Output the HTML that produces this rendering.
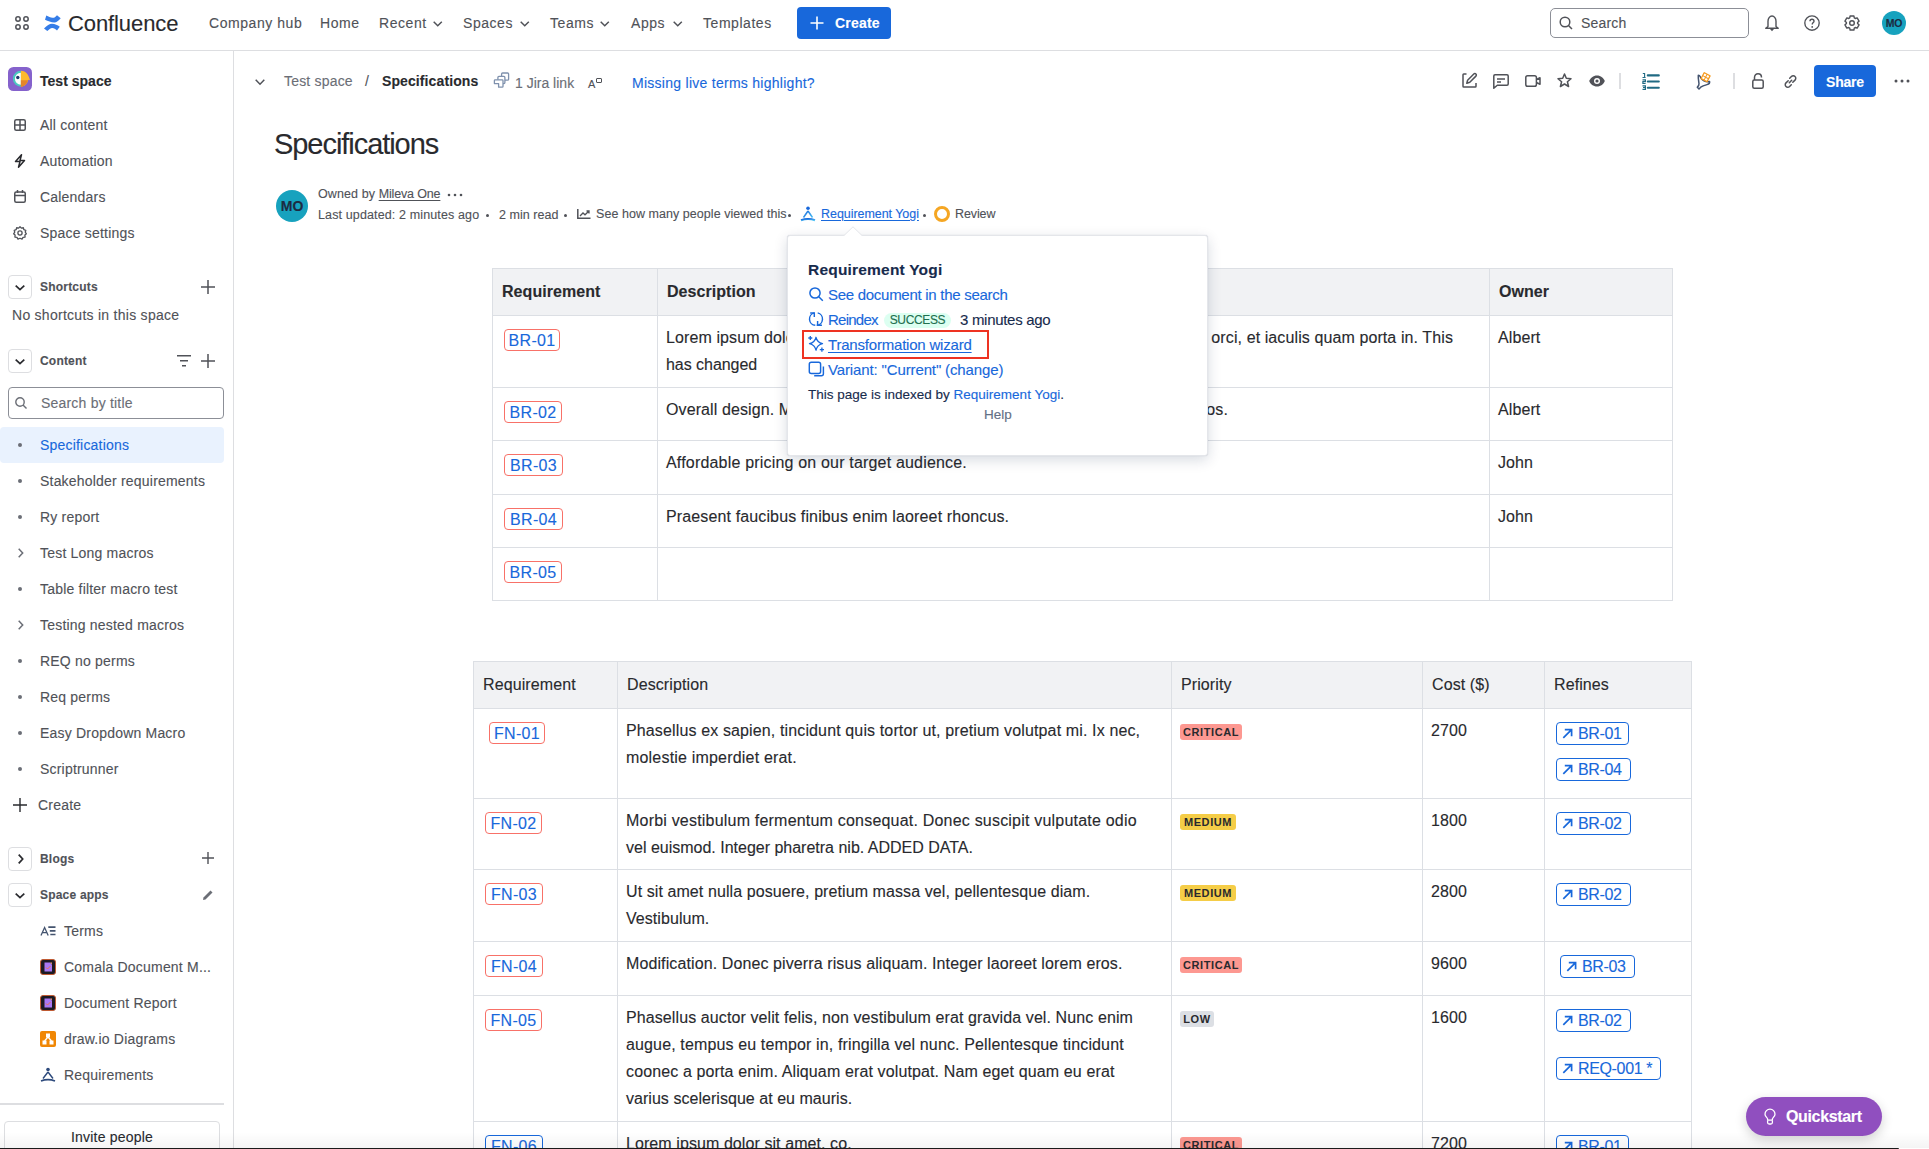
<!DOCTYPE html>
<html><head><meta charset="utf-8">
<style>
*{box-sizing:border-box;margin:0;padding:0}
html,body{width:1929px;height:1149px;overflow:hidden;background:#fff}
body{position:relative;font-family:"Liberation Sans",sans-serif;color:#292A2E}
.a{position:absolute}
.t{position:absolute;white-space:nowrap;-webkit-text-stroke:0.12px currentColor}
svg{position:absolute;overflow:visible}
/* top nav */
.nav{font-size:14px;color:#505258;line-height:20px;top:13px;letter-spacing:0.55px}
.chev{position:absolute;width:7px;height:7px;border-right:1.5px solid #505258;border-bottom:1.5px solid #505258;transform:rotate(45deg)}
/* sidebar */
.sb{font-size:14px;color:#505258;line-height:20px;letter-spacing:0.2px}
.dot{position:absolute;width:4px;height:4px;border-radius:50%;background:#6B6E76}
.box{position:absolute;width:24px;height:24px;border:1px solid #DDDEE1;border-radius:4px;background:#fff}
/* content */
.lnk{color:#1868DB}
.loz{position:absolute;-webkit-text-stroke:0.12px currentColor;border:1px solid #F87168;border-radius:4px;color:#1868DB;font-size:16px;line-height:20px;padding-top:1px;text-align:center;letter-spacing:0.3px}
.rf{position:absolute;-webkit-text-stroke:0.12px currentColor;border:1px solid #1868DB;border-radius:4px;color:#1868DB;font-size:16px;line-height:20px;padding-top:1px;padding-left:21px;letter-spacing:-0.35px}
.pr{position:absolute;border-radius:3px;font-size:11px;font-weight:bold;line-height:16px;text-align:center;color:#292A2E;letter-spacing:0.6px}
.cell{font-size:16px;line-height:27px;color:#292A2E;letter-spacing:0.1px}
</style></head><body>

<!-- ===== TOP NAV ===== -->
<div class="a" style="left:0;top:50px;width:1929px;height:1px;background:#DDDEE1"></div>
<!-- app grid -->
<svg style="left:15px;top:16px" width="14" height="14" viewBox="0 0 14 14"><g fill="none" stroke="#505258" stroke-width="1.5"><circle cx="3" cy="3" r="2.2"/><circle cx="11" cy="3" r="2.2"/><circle cx="3" cy="11" r="2.2"/><circle cx="11" cy="11" r="2.2"/></g></svg>
<!-- confluence logo -->
<svg style="left:40px;top:10px" width="26" height="26" viewBox="0 0 26 26"><path d="M6.3 5.5L5 9.8C8 11 11 12.5 14.5 12.6C16.5 12.4 18.5 10.8 20.7 8.3L17 5.2C15.5 7 14 8 12.5 7.8C10.5 7.6 8.5 6.5 6.3 5.5Z" fill="#357DE8"/><path d="M4 18.5L7.3 21C9 19.5 10.5 17.9 12.3 17.9C14 17.9 15.5 19 17 20.6L19.8 16.8C17.5 15.2 15 13.8 12 13.8C9.5 13.8 7 15.5 4 18.5Z" fill="#357DE8"/></svg>
<div class="t" style="left:68px;top:10px;font-size:22px;line-height:28px;color:#292A2E;letter-spacing:-0.1px">Confluence</div>
<div class="t nav" style="left:209px">Company hub</div>
<div class="t nav" style="left:320px">Home</div>
<div class="t nav" style="left:379px">Recent</div><svg style="left:433px;top:21px" width="9.5" height="5.5" viewBox="0 0 9.5 5.5"><path d="M0.7 0.7L4.75 4.7L8.8 0.7" fill="none" stroke="#505258" stroke-width="1.5"/></svg>
<div class="t nav" style="left:463px">Spaces</div><svg style="left:520px;top:21px" width="9.5" height="5.5" viewBox="0 0 9.5 5.5"><path d="M0.7 0.7L4.75 4.7L8.8 0.7" fill="none" stroke="#505258" stroke-width="1.5"/></svg>
<div class="t nav" style="left:550px">Teams</div><svg style="left:600px;top:21px" width="9.5" height="5.5" viewBox="0 0 9.5 5.5"><path d="M0.7 0.7L4.75 4.7L8.8 0.7" fill="none" stroke="#505258" stroke-width="1.5"/></svg>
<div class="t nav" style="left:631px">Apps</div><svg style="left:673px;top:21px" width="9.5" height="5.5" viewBox="0 0 9.5 5.5"><path d="M0.7 0.7L4.75 4.7L8.8 0.7" fill="none" stroke="#505258" stroke-width="1.5"/></svg>
<div class="t nav" style="left:703px">Templates</div>
<div class="a" style="left:797px;top:7px;width:94px;height:32px;background:#1868DB;border-radius:4px"></div>
<svg style="left:810px;top:16px" width="14" height="14" viewBox="0 0 14 14"><path d="M7 0.5V13.5M0.5 7H13.5" stroke="#fff" stroke-width="1.6"/></svg>
<div class="t" style="left:835px;top:13px;font-size:14px;line-height:20px;color:#fff;font-weight:bold;letter-spacing:0.2px">Create</div>

<!-- search -->
<div class="a" style="left:1550px;top:8px;width:199px;height:30px;border:1px solid #8C8F97;border-radius:5px"></div>
<svg style="left:1559px;top:16px" width="14" height="14" viewBox="0 0 14 14"><circle cx="6" cy="6" r="4.8" fill="none" stroke="#505258" stroke-width="1.5"/><path d="M9.5 9.5L13 13" stroke="#505258" stroke-width="1.5"/></svg>
<div class="t" style="left:1581px;top:13px;font-size:14px;line-height:20px;color:#505258;letter-spacing:0.2px">Search</div>
<!-- bell -->
<svg style="left:1764px;top:15px" width="16" height="16" viewBox="0 0 16 16"><path d="M4 11.5V6.2C4 3.6 5.7 1 8 1S12 3.6 12 6.2V11.5L14.3 13.2H1.7Z" fill="none" stroke="#505258" stroke-width="1.4" stroke-linejoin="round"/><path d="M6.5 13.5L8 15.3L9.5 13.5" fill="none" stroke="#505258" stroke-width="1.3"/></svg>
<!-- help -->
<svg style="left:1804px;top:15px" width="16" height="16" viewBox="0 0 16 16"><circle cx="8" cy="8" r="7.2" fill="none" stroke="#505258" stroke-width="1.35"/><path d="M6 6.3C6 5 6.9 4.3 8 4.3S10 5 10 6.2C10 7.6 8.2 7.7 8.2 9.6" fill="none" stroke="#505258" stroke-width="1.4"/><circle cx="8.2" cy="11.9" r="0.9" fill="#505258"/></svg>
<!-- settings -->
<svg style="left:1844px;top:15px" width="16" height="16" viewBox="0 0 16 16"><path d="M5.72 2.88 L6.11 0.95 L9.89 0.95 L10.28 2.88 L11.29 3.47 L13.16 2.84 L15.05 6.11 L13.57 7.41 L13.57 8.59 L15.05 9.89 L13.16 13.16 L11.29 12.53 L10.28 13.12 L9.89 15.05 L6.11 15.05 L5.72 13.12 L4.71 12.53 L2.84 13.16 L0.95 9.89 L2.43 8.59 L2.43 7.41 L0.95 6.11 L2.84 2.84 L4.71 3.47Z" fill="none" stroke="#505258" stroke-width="1.4" stroke-linejoin="round"/><circle cx="8" cy="8" r="2.3" fill="none" stroke="#505258" stroke-width="1.4"/></svg>
<!-- avatar -->
<div class="a" style="left:1882px;top:11px;width:24px;height:24px;border-radius:50%;background:#17A2BE"></div>
<div class="t" style="left:1882px;top:16px;width:24px;text-align:center;font-size:10.5px;line-height:14px;color:#1C2B42;font-weight:bold;letter-spacing:-0.2px">MO</div>

<!-- ===== SIDEBAR ===== -->
<div class="a" style="left:233px;top:51px;width:1px;height:1098px;background:#DDDEE1"></div>
<!-- space avatar -->
<svg style="left:8px;top:67px" width="24" height="24" viewBox="0 0 24 24"><rect width="24" height="24" rx="5.5" fill="#8562CC"/><path d="M12.9 3.7A8 8 0 0 0 12.9 19.7Z" fill="#4BC9C1"/><path d="M12.9 5.7A6 6 0 0 0 12.9 17.7Z" fill="#fff"/><circle cx="9.8" cy="10.5" r="1.7" fill="#1D3A6E"/><path d="M12.9 3.7C17 3.7 20.5 6.5 22 13.3L20.3 12.8C19.5 16.5 16.5 19.7 12.9 19.7Z" fill="#FDBA2C"/><path d="M12.9 13.3H20C19 17 16.3 19.7 12.9 19.7Z" fill="#E5862A"/></svg>
<div class="t" style="left:40px;top:71px;font-size:14px;line-height:20px;font-weight:bold;color:#292A2E;letter-spacing:0.02px">Test space</div>

<!-- nav items -->
<svg style="left:14px;top:119px" width="12" height="12" viewBox="0 0 12 12"><rect x="0.75" y="0.75" width="10.5" height="10.5" rx="1.5" fill="none" stroke="#505258" stroke-width="1.5"/><path d="M6 1V11M1 6H11" stroke="#505258" stroke-width="1.5"/></svg>
<div class="t sb" style="left:40px;top:115px">All content</div>
<svg style="left:14px;top:154px" width="12" height="14" viewBox="0 0 12 14"><path d="M7.5 0.8L1.5 7.5H6L4.5 13.2L10.5 6.5H6Z" fill="none" stroke="#292A2E" stroke-width="1.5" stroke-linejoin="round"/></svg>
<div class="t sb" style="left:40px;top:151px">Automation</div>
<svg style="left:14px;top:190px" width="12" height="13" viewBox="0 0 12 13"><rect x="0.75" y="2" width="10.5" height="10.25" rx="1.5" fill="none" stroke="#505258" stroke-width="1.5"/><path d="M1 5.5H11M3.5 0V3M8.5 0V3" stroke="#505258" stroke-width="1.5"/></svg>
<div class="t sb" style="left:40px;top:187px">Calendars</div>
<svg style="left:13px;top:226px" width="14" height="14" viewBox="0 0 16 16"><path d="M8 0.8L9.6 2.4L11.8 2L12.4 4.2L14.6 4.9L14 7.1L15.3 8.9L13.6 10.4L13.8 12.7L11.5 12.9L10.3 14.9L8 14L5.7 14.9L4.5 12.9L2.2 12.7L2.4 10.4L0.7 8.9L2 7.1L1.4 4.9L3.6 4.2L4.2 2L6.4 2.4Z" fill="none" stroke="#505258" stroke-width="1.5" stroke-linejoin="round"/><circle cx="8" cy="8" r="2.4" fill="none" stroke="#505258" stroke-width="1.5"/></svg>
<div class="t sb" style="left:40px;top:223px">Space settings</div>

<!-- shortcuts -->
<div class="box" style="left:8px;top:275px"></div>
<svg style="left:15px;top:285px" width="10" height="5.5" viewBox="0 0 10 5.5"><path d="M0.7 0.7L5.0 4.7L9.3 0.7" fill="none" stroke="#292A2E" stroke-width="1.7" stroke-linejoin="miter"/></svg>
<div class="t" style="left:40px;top:277px;font-size:12px;line-height:20px;font-weight:bold;color:#505258;letter-spacing:0.2px">Shortcuts</div>
<svg style="left:201px;top:280px" width="14" height="14" viewBox="0 0 14 14"><path d="M7 0V14M0 7H14" stroke="#505258" stroke-width="1.5"/></svg>
<div class="t sb" style="left:12px;top:305px;letter-spacing:0.27px">No shortcuts in this space</div>

<!-- content -->
<div class="box" style="left:8px;top:349px"></div>
<svg style="left:15px;top:359px" width="10" height="5.5" viewBox="0 0 10 5.5"><path d="M0.7 0.7L5.0 4.7L9.3 0.7" fill="none" stroke="#292A2E" stroke-width="1.7" stroke-linejoin="miter"/></svg>
<div class="t" style="left:40px;top:351px;font-size:12px;line-height:20px;font-weight:bold;color:#505258;letter-spacing:0.2px">Content</div>
<svg style="left:177px;top:355px" width="14" height="12" viewBox="0 0 14 12"><path d="M0 0.75H14M3 5.75H11M5 10.75H9" stroke="#505258" stroke-width="1.5"/></svg>
<svg style="left:201px;top:354px" width="14" height="14" viewBox="0 0 14 14"><path d="M7 0V14M0 7H14" stroke="#505258" stroke-width="1.5"/></svg>
<div class="a" style="left:8px;top:387px;width:216px;height:32px;border:1px solid #8C8F97;border-radius:4px"></div>
<svg style="left:15px;top:397px" width="12" height="12" viewBox="0 0 12 12"><circle cx="5" cy="5" r="4.2" fill="none" stroke="#6B6E76" stroke-width="1.4"/><path d="M8 8L11.5 11.5" stroke="#6B6E76" stroke-width="1.4"/></svg>
<div class="t sb" style="left:41px;top:393px;color:#6B6E76">Search by title</div>

<!-- page tree -->
<div class="a" style="left:0;top:427px;width:224px;height:36px;background:#E9F2FE;border-radius:4px"></div>
<div class="dot" style="left:18px;top:443px"></div><div class="t sb" style="left:40px;top:435px;color:#1868DB">Specifications</div>
<div class="dot" style="left:18px;top:479px"></div><div class="t sb" style="left:40px;top:471px">Stakeholder requirements</div>
<div class="dot" style="left:18px;top:515px"></div><div class="t sb" style="left:40px;top:507px">Ry report</div>
<svg style="left:18px;top:548px" width="5.5" height="10" viewBox="0 0 5.5 10"><path d="M0.7 0.7L4.7 5.0L0.7 9.3" fill="none" stroke="#6B6E76" stroke-width="1.5"/></svg><div class="t sb" style="left:40px;top:543px">Test Long macros</div>
<div class="dot" style="left:18px;top:587px"></div><div class="t sb" style="left:40px;top:579px">Table filter macro test</div>
<svg style="left:18px;top:620px" width="5.5" height="10" viewBox="0 0 5.5 10"><path d="M0.7 0.7L4.7 5.0L0.7 9.3" fill="none" stroke="#6B6E76" stroke-width="1.5"/></svg><div class="t sb" style="left:40px;top:615px">Testing nested macros</div>
<div class="dot" style="left:18px;top:659px"></div><div class="t sb" style="left:40px;top:651px">REQ no perms</div>
<div class="dot" style="left:18px;top:695px"></div><div class="t sb" style="left:40px;top:687px">Req perms</div>
<div class="dot" style="left:18px;top:731px"></div><div class="t sb" style="left:40px;top:723px">Easy Dropdown Macro</div>
<div class="dot" style="left:18px;top:767px"></div><div class="t sb" style="left:40px;top:759px">Scriptrunner</div>
<svg style="left:13px;top:798px" width="14" height="14" viewBox="0 0 14 14"><path d="M7 0V14M0 7H14" stroke="#292A2E" stroke-width="1.4"/></svg>
<div class="t sb" style="left:38px;top:795px">Create</div>

<!-- blogs / apps -->
<div class="box" style="left:8px;top:847px"></div>
<svg style="left:18px;top:854px" width="5.5" height="10" viewBox="0 0 5.5 10"><path d="M0.7 0.7L4.7 5.0L0.7 9.3" fill="none" stroke="#292A2E" stroke-width="1.7"/></svg>
<div class="t" style="left:40px;top:849px;font-size:12px;line-height:20px;font-weight:bold;color:#505258;letter-spacing:0.2px">Blogs</div>
<svg style="left:202px;top:852px" width="12" height="12" viewBox="0 0 12 12"><path d="M6 0V12M0 6H12" stroke="#505258" stroke-width="1.4"/></svg>
<div class="box" style="left:8px;top:883px"></div>
<svg style="left:15px;top:893px" width="10" height="5.5" viewBox="0 0 10 5.5"><path d="M0.7 0.7L5.0 4.7L9.3 0.7" fill="none" stroke="#292A2E" stroke-width="1.7" stroke-linejoin="miter"/></svg>
<div class="t" style="left:40px;top:885px;font-size:12px;line-height:20px;font-weight:bold;color:#505258;letter-spacing:0.2px">Space apps</div>
<svg style="left:202px;top:889px" width="12" height="12" viewBox="0 0 12 12"><path d="M1 11L1.5 8.5L8.5 1.5L10.5 3.5L3.5 10.5Z" fill="#6B6E76"/></svg>

<svg style="left:40px;top:925px" width="17" height="12" viewBox="0 0 17 12"><path d="M1 10.5L4.6 2.5L8.2 10.5M2.4 7.6H6.8" fill="none" stroke="#44546F" stroke-width="1.3"/><path d="M8.3 2.2H15.5M9.8 5.8H15.5M10.3 9.5H15.5" stroke="#44546F" stroke-width="1.7"/></svg>
<div class="t sb" style="left:64px;top:921px">Terms</div>
<div class="a" style="left:40px;top:959px;width:16px;height:16px;border-radius:3px;background:#1C1A23;border:1px solid #C05A32"></div>
<svg style="left:44px;top:962px" width="9" height="10" viewBox="0 0 9 10"><path d="M0.5 0.5H6L8 2.5V9.5H0.5Z" fill="#A978F5"/><path d="M6 0.5L8 0.5L8 2.5Z" fill="#F0A070"/><path d="M2 5.5L3.5 7L6.5 4" fill="none" stroke="#E8734A" stroke-width="1"/></svg>
<div class="t sb" style="left:64px;top:957px">Comala Document M...</div>
<div class="a" style="left:40px;top:995px;width:16px;height:16px;border-radius:3px;background:#1C1A23;border:1px solid #C05A32"></div>
<svg style="left:44px;top:998px" width="9" height="10" viewBox="0 0 9 10"><path d="M0.5 0.5H6L8 2.5V9.5H0.5Z" fill="#A978F5"/><path d="M6 0.5L8 0.5L8 2.5Z" fill="#F0A070"/><path d="M2 5.5L3.5 7L6.5 4" fill="none" stroke="#E8734A" stroke-width="1"/></svg>
<div class="t sb" style="left:64px;top:993px">Document Report</div>
<div class="a" style="left:40px;top:1031px;width:16px;height:16px;border-radius:2px;background:#F08705"></div>
<svg style="left:40px;top:1031px" width="16" height="16" viewBox="0 0 16 16"><rect x="6" y="2.5" width="4" height="4" fill="#fff"/><rect x="2.5" y="9.5" width="4" height="4" fill="#fff"/><rect x="9.5" y="9.5" width="4" height="4" fill="#fff"/><path d="M8 6L4.5 10M8 6L11.5 10" stroke="#fff" stroke-width="1.2"/></svg>
<div class="t sb" style="left:64px;top:1029px">draw.io Diagrams</div>
<svg style="left:40px;top:1067px" width="16" height="16" viewBox="0 0 16 16"><circle cx="8" cy="2.5" r="1.8" fill="#2D4A7C"/><path d="M8 5L3 11.5M8 5L13 11.5" stroke="#2D4A7C" stroke-width="1.4"/><path d="M1 14C5 12.5 11 12.5 15 14" stroke="#2D4A7C" stroke-width="1.8" fill="none"/></svg>
<div class="t sb" style="left:64px;top:1065px">Requirements</div>

<div class="a" style="left:0;top:1103px;width:224px;height:2px;background:#DDDEE1"></div>
<div class="a" style="left:4px;top:1121px;width:216px;height:40px;border:1px solid #DDDEE1;border-radius:4px"></div>
<div class="t" style="left:4px;top:1127px;width:216px;text-align:center;font-size:14px;line-height:20px;color:#292A2E;letter-spacing:0.2px">Invite people</div>

<!-- ===== BREADCRUMB BAR ===== -->
<svg style="left:255px;top:79px" width="10" height="6" viewBox="0 0 10 6"><path d="M0.7 0.7L5.0 5.2L9.3 0.7" fill="none" stroke="#505258" stroke-width="1.5"/></svg>
<div class="t" style="left:284px;top:71px;font-size:14px;line-height:20px;color:#6B6E76;letter-spacing:0.19px">Test space</div>
<div class="t" style="left:365px;top:71px;font-size:14px;line-height:20px;color:#505258">/</div>
<div class="t" style="left:382px;top:71px;font-size:14px;line-height:20px;color:#292A2E;font-weight:bold;letter-spacing:0.1px">Specifications</div>
<svg style="left:488px;top:68px" width="26" height="26" viewBox="0 0 26 26"><g fill="#fff" stroke="#7F91AD" stroke-width="1.3" stroke-linejoin="round"><rect x="13.6" y="5" width="7" height="7.2" rx="1"/><rect x="9.9" y="8.4" width="7" height="7.2" rx="1"/><path d="M7.2 11.8H14.2C14.7 11.8 15 12.1 15 12.6V18.4C15 18.9 14.7 19.2 14.2 19.2H10.6V15.6H6.4V12.6C6.4 12.1 6.7 11.8 7.2 11.8Z"/></g></svg>
<div class="t" style="left:515px;top:73px;font-size:14px;line-height:20px;color:#6B6E76">1 Jira link</div>
<div class="t" style="left:588px;top:78px;font-size:11px;line-height:12px;color:#505258">A</div>
<div class="a" style="left:596px;top:78px;width:6px;height:5px;border:1px solid #505258;border-top-width:1.5px;border-radius:1px"></div>
<div class="t" style="left:632px;top:73px;font-size:14px;line-height:20px;color:#1868DB;letter-spacing:0.27px">Missing live terms highlight?</div>

<!-- toolbar icons -->
<svg style="left:1462px;top:73px" width="15" height="15" viewBox="0 0 15 15"><path d="M4.5 1H1.8C1.3 1 1 1.3 1 1.8V13.2C1 13.7 1.3 14 1.8 14H13.2C13.7 14 14 13.7 14 13.2V10" fill="none" stroke="#505258" stroke-width="1.5"/><path d="M4.8 10.2L5.6 7.2L11.8 1C12.4 0.4 13.3 0.4 13.9 1C14.5 1.6 14.5 2.5 13.9 3.1L7.8 9.3Z" fill="none" stroke="#505258" stroke-width="1.5" stroke-linejoin="round"/></svg>
<svg style="left:1493px;top:74px" width="16" height="15" viewBox="0 0 16 15"><path d="M0.8 14.2V2C0.8 1.3 1.3 0.8 2 0.8H14C14.7 0.8 15.2 1.3 15.2 2V10C15.2 10.7 14.7 11.2 14 11.2H4.3Z" fill="none" stroke="#505258" stroke-width="1.5" stroke-linejoin="round"/><path d="M4 5H12M4 8H8" stroke="#505258" stroke-width="1.5"/></svg>
<svg style="left:1525px;top:75px" width="16" height="12" viewBox="0 0 16 12"><rect x="0.8" y="0.8" width="10.6" height="10.4" rx="1.8" fill="none" stroke="#505258" stroke-width="1.5"/><path d="M11.4 4.5L15 2.8V9.2L11.4 7.5" fill="none" stroke="#505258" stroke-width="1.5" stroke-linejoin="round"/></svg>
<svg style="left:1557px;top:73px" width="15" height="15" viewBox="0 0 15 15"><path d="M7.5 1L9.3 5.3L14 5.7L10.4 8.8L11.6 13.5L7.5 11L3.4 13.5L4.6 8.8L1 5.7L5.7 5.3Z" fill="none" stroke="#505258" stroke-width="1.5" stroke-linejoin="round"/></svg>
<svg style="left:1589px;top:75px" width="16" height="12" viewBox="0 0 16 12"><path d="M8 0.5C4.2 0.5 1.3 3 0.2 6C1.3 9 4.2 11.5 8 11.5S14.7 9 15.8 6C14.7 3 11.8 0.5 8 0.5Z" fill="#505258"/><circle cx="8" cy="6" r="3" fill="#fff"/><circle cx="8" cy="6" r="1.6" fill="#505258"/></svg>
<div class="a" style="left:1619px;top:73px;width:2px;height:16px;background:#DDDEE1"></div>
<svg style="left:1636px;top:66px" width="30" height="30" viewBox="0 0 30 30"><path d="M11.8 9.4H22.8M11.8 15.5H22.8M11.8 21.7H22.8" stroke="#206A83" stroke-width="2.1" stroke-linecap="round"/><path d="M6.8 7.5H8.6V11.5M6.5 11.5H9.6" fill="none" stroke="#206A83" stroke-width="1.1"/><path d="M6.5 13.8H9.4V15.6H6.9V17.5H9.6" fill="none" stroke="#206A83" stroke-width="1.2"/><path d="M6.5 19.8H9.4V23.3H6.5M7 21.5H9.4" fill="none" stroke="#206A83" stroke-width="1.2"/></svg>
<svg style="left:1690px;top:66px" width="30" height="30" viewBox="0 0 30 30"><path d="M8.3 9.3C8 12 8.6 15 9 17.5C9.2 19 8.5 20 7.3 21.3L9 23L10.7 21.2C12 20.3 14 19.5 17 18.6C18.5 18.2 20 17.5 19.6 15.6C17 16 13 15 11 12C10.2 10.8 9.9 9.3 8.3 9.3Z" fill="none" stroke="#44546F" stroke-width="1.5" stroke-linejoin="round"/><g transform="rotate(28 15.6 11.2)"><rect x="11.6" y="7.2" width="8" height="8" rx="0.8" fill="#F79A1E"/><rect x="12.9" y="8.5" width="2.2" height="2.2" fill="#fff"/><rect x="16.1" y="8.5" width="2.2" height="2.2" fill="#fff"/><rect x="12.9" y="11.7" width="2.2" height="2.2" fill="#fff"/><rect x="16.1" y="11.7" width="2.2" height="2.2" fill="#fff"/></g></svg>
<div class="a" style="left:1733px;top:73px;width:2px;height:16px;background:#DDDEE1"></div>
<svg style="left:1752px;top:73px" width="12" height="16" viewBox="0 0 12 16"><path d="M2.5 7V4.5C2.5 2.3 4 0.8 6 0.8S9.5 2.3 9.5 4.5" fill="none" stroke="#505258" stroke-width="1.5"/><rect x="0.8" y="7" width="10.4" height="8.2" rx="1.5" fill="none" stroke="#505258" stroke-width="1.5"/></svg>
<svg style="left:1783px;top:74px" width="15" height="15" viewBox="0 0 15 15"><path d="M6.3 8.7L8.7 6.3M5.2 6.7L3 8.9C2 9.9 2 11.6 3 12.5C3.9 13.5 5.6 13.5 6.6 12.5L8.3 10.8M6.7 4.2L8.4 2.5C9.4 1.5 11.1 1.5 12 2.5C13 3.4 13 5.1 12 6.1L9.8 8.3" fill="none" stroke="#505258" stroke-width="1.5" stroke-linecap="round"/></svg>
<div class="a" style="left:1814px;top:65px;width:62px;height:32px;background:#1868DB;border-radius:4px"></div>
<div class="t" style="left:1814px;top:72px;width:62px;text-align:center;font-size:14px;line-height:20px;color:#fff;font-weight:bold;letter-spacing:-0.2px">Share</div>
<svg style="left:1894px;top:79px" width="16" height="4" viewBox="0 0 16 4"><circle cx="2" cy="2" r="1.5" fill="#505258"/><circle cx="8" cy="2" r="1.5" fill="#505258"/><circle cx="14" cy="2" r="1.5" fill="#505258"/></svg>

<!-- ===== TITLE / BYLINE ===== -->
<div class="t" style="left:274px;top:126px;font-size:29px;line-height:36px;color:#292A2E;letter-spacing:-1.05px">Specifications</div>
<div class="a" style="left:276px;top:190px;width:32px;height:32px;border-radius:50%;background:#17A2BE"></div>
<div class="t" style="left:276px;top:196px;width:32px;text-align:center;font-size:14px;line-height:20px;color:#1C2B42;font-weight:bold">MO</div>
<div class="t" style="left:318px;top:186px;font-size:12.5px;line-height:16px;color:#505258;letter-spacing:0.1px">Owned by <span style="text-decoration:underline;text-underline-offset:2px;letter-spacing:-0.15px">Mileva One</span></div>
<svg style="left:447px;top:193px" width="16" height="4" viewBox="0 0 16 4"><circle cx="2" cy="2" r="1.3" fill="#505258"/><circle cx="8" cy="2" r="1.3" fill="#505258"/><circle cx="14" cy="2" r="1.3" fill="#505258"/></svg>
<div class="t" style="left:318px;top:207px;font-size:12.5px;line-height:16px;color:#505258;letter-spacing:0.13px">Last updated: 2 minutes ago</div>
<div class="dot" style="left:486px;top:214px;width:3px;height:3px;background:#505258"></div>
<div class="t" style="left:499px;top:207px;font-size:12.5px;line-height:16px;color:#505258;letter-spacing:0.05px">2 min read</div>
<div class="dot" style="left:564px;top:214px;width:3px;height:3px;background:#505258"></div>
<svg style="left:577px;top:209px" width="14" height="10" viewBox="0 0 14 10"><path d="M0.8 0V9.2H13.5" fill="none" stroke="#505258" stroke-width="1.5"/><path d="M3 7L6 4L8 5.8L12 2M9.5 2H12V4.5" fill="none" stroke="#505258" stroke-width="1.3"/></svg>
<div class="t" style="left:596px;top:206px;font-size:12.5px;line-height:16px;color:#505258;letter-spacing:0.05px">See how many people viewed this</div>
<div class="dot" style="left:788px;top:214px;width:3px;height:3px;background:#505258"></div>
<svg style="left:800px;top:206px" width="16" height="16" viewBox="0 0 16 16"><defs><linearGradient id="yg" x1="0" y1="0" x2="1" y2="1"><stop offset="0" stop-color="#1868DB"/><stop offset="1" stop-color="#4BC0F5"/></linearGradient></defs><circle cx="8" cy="2.2" r="1.8" fill="#1868DB"/><path d="M8 5L3.5 11.5M8 5L12.5 11.5" stroke="url(#yg)" stroke-width="1.5"/><path d="M1 14.3C5 12.8 11 12.8 15 14.3" stroke="url(#yg)" stroke-width="2" fill="none"/></svg>
<div class="t" style="left:821px;top:206px;font-size:12.5px;line-height:16px;color:#1868DB;letter-spacing:-0.05px;text-decoration:underline;text-underline-offset:2px">Requirement Yogi</div>
<div class="dot" style="left:923px;top:214px;width:3px;height:3px;background:#505258"></div>
<div class="a" style="left:934px;top:206px;width:16px;height:16px;border-radius:50%;border:3.5px solid #F5A623"></div>
<div class="t" style="left:955px;top:206px;font-size:12.5px;line-height:16px;color:#505258;letter-spacing:-0.1px">Review</div>

<!-- TABLES -->
<div class="a" style="left:492px;top:268px;width:1180px;height:47px;background:#F1F2F4"></div>
<div class="a" style="left:492px;top:268px;width:1181px;height:1px;background:#DCDFE4"></div>
<div class="a" style="left:492px;top:315px;width:1181px;height:1px;background:#DCDFE4"></div>
<div class="a" style="left:492px;top:387px;width:1181px;height:1px;background:#DCDFE4"></div>
<div class="a" style="left:492px;top:440px;width:1181px;height:1px;background:#DCDFE4"></div>
<div class="a" style="left:492px;top:494px;width:1181px;height:1px;background:#DCDFE4"></div>
<div class="a" style="left:492px;top:547px;width:1181px;height:1px;background:#DCDFE4"></div>
<div class="a" style="left:492px;top:600px;width:1181px;height:1px;background:#DCDFE4"></div>
<div class="a" style="left:492px;top:268px;width:1px;height:333px;background:#DCDFE4"></div>
<div class="a" style="left:657px;top:268px;width:1px;height:333px;background:#DCDFE4"></div>
<div class="a" style="left:1489px;top:268px;width:1px;height:333px;background:#DCDFE4"></div>
<div class="a" style="left:1672px;top:268px;width:1px;height:333px;background:#DCDFE4"></div>
<div class="t cell" style="left:502px;top:282px;font-weight:bold;line-height:20px;letter-spacing:0.05px">Requirement</div>
<div class="t cell" style="left:667px;top:282px;font-weight:bold;line-height:20px;letter-spacing:0.05px">Description</div>
<div class="t cell" style="left:1499px;top:282px;font-weight:bold;line-height:20px;letter-spacing:0.05px">Owner</div>
<div class="loz" style="left:504px;top:329px;width:56px;height:22px">BR-01</div>
<div class="t cell" style="left:666px;top:324px;">Lorem ipsum dolor sit amet, consectetur adipiscing elit. Donec eget</div>
<div class="t cell" style="left:1000px;top:324px;width:453px;text-align:right">orci, et iaculis quam porta in. This</div>
<div class="t cell" style="left:666px;top:351px;letter-spacing:-0.04px;">has changed</div>
<div class="t cell" style="left:1498px;top:324px;">Albert</div>
<div class="loz" style="left:504px;top:401px;width:58px;height:22px">BR-02</div>
<div class="t cell" style="left:666px;top:396px;">Overall design. Morbi tempus lacus a porta rhoncus, sed volutpat</div>
<div class="t cell" style="left:775px;top:396px;width:453px;text-align:right">os.</div>
<div class="t cell" style="left:1498px;top:396px;">Albert</div>
<div class="loz" style="left:504px;top:454px;width:59px;height:22px">BR-03</div>
<div class="t cell" style="left:666px;top:449px;letter-spacing:0.185px;">Affordable pricing on our target audience.</div>
<div class="t cell" style="left:1498px;top:449px;">John</div>
<div class="loz" style="left:504px;top:508px;width:59px;height:22px">BR-04</div>
<div class="t cell" style="left:666px;top:503px;letter-spacing:0.13px;">Praesent faucibus finibus enim laoreet rhoncus.</div>
<div class="t cell" style="left:1498px;top:503px;">John</div>
<div class="loz" style="left:504px;top:561px;width:58px;height:22px">BR-05</div>
<div class="a" style="left:473px;top:661px;width:1218px;height:47px;background:#F1F2F4"></div>
<div class="a" style="left:473px;top:661px;width:1219px;height:1px;background:#DCDFE4"></div>
<div class="a" style="left:473px;top:708px;width:1219px;height:1px;background:#DCDFE4"></div>
<div class="a" style="left:473px;top:798px;width:1219px;height:1px;background:#DCDFE4"></div>
<div class="a" style="left:473px;top:869px;width:1219px;height:1px;background:#DCDFE4"></div>
<div class="a" style="left:473px;top:941px;width:1219px;height:1px;background:#DCDFE4"></div>
<div class="a" style="left:473px;top:995px;width:1219px;height:1px;background:#DCDFE4"></div>
<div class="a" style="left:473px;top:1121px;width:1219px;height:1px;background:#DCDFE4"></div>
<div class="a" style="left:473px;top:1260px;width:1219px;height:1px;background:#DCDFE4"></div>
<div class="a" style="left:473px;top:661px;width:1px;height:600px;background:#DCDFE4"></div>
<div class="a" style="left:617px;top:661px;width:1px;height:600px;background:#DCDFE4"></div>
<div class="a" style="left:1171px;top:661px;width:1px;height:600px;background:#DCDFE4"></div>
<div class="a" style="left:1422px;top:661px;width:1px;height:600px;background:#DCDFE4"></div>
<div class="a" style="left:1544px;top:661px;width:1px;height:600px;background:#DCDFE4"></div>
<div class="a" style="left:1691px;top:661px;width:1px;height:600px;background:#DCDFE4"></div>
<div class="t cell" style="left:483px;top:675px;line-height:20px;letter-spacing:0.1px">Requirement</div>
<div class="t cell" style="left:627px;top:675px;line-height:20px;letter-spacing:0.1px">Description</div>
<div class="t cell" style="left:1181px;top:675px;line-height:20px;letter-spacing:0.1px">Priority</div>
<div class="t cell" style="left:1432px;top:675px;line-height:20px;letter-spacing:0.1px">Cost ($)</div>
<div class="t cell" style="left:1554px;top:675px;line-height:20px;letter-spacing:0.1px">Refines</div>
<div class="loz" style="left:489px;top:722px;width:56px;height:22px">FN-01</div>
<div class="t cell" style="left:626px;top:717px;letter-spacing:0.132px;">Phasellus ex sapien, tincidunt quis tortor ut, pretium volutpat mi. Ix nec,</div>
<div class="t cell" style="left:626px;top:744px;letter-spacing:0.191px;">molestie imperdiet erat.</div>
<div class="pr" style="left:1180px;top:724px;width:62px;height:16px;background:#FD9891">CRITICAL</div>
<div class="t cell" style="left:1431px;top:717px;">2700</div>
<div class="rf" style="left:1556px;top:722px;width:73px;height:23px"><svg style="left:5px;top:5px" width="11" height="11" viewBox="0 0 11 11"><path d="M1.3 9.9L9.3 1.9M2.8 1.6H9.6V8.3" fill="none" stroke="#1868DB" stroke-width="1.7"/></svg>BR-01</div>
<div class="rf" style="left:1556px;top:758px;width:75px;height:23px"><svg style="left:5px;top:5px" width="11" height="11" viewBox="0 0 11 11"><path d="M1.3 9.9L9.3 1.9M2.8 1.6H9.6V8.3" fill="none" stroke="#1868DB" stroke-width="1.7"/></svg>BR-04</div>
<div class="loz" style="left:485px;top:812px;width:57px;height:22px">FN-02</div>
<div class="t cell" style="left:626px;top:807px;letter-spacing:0.203px;">Morbi vestibulum fermentum consequat. Donec suscipit vulputate odio</div>
<div class="t cell" style="left:626px;top:834px;letter-spacing:-0.004px;">vel euismod. Integer pharetra nib. ADDED DATA.</div>
<div class="pr" style="left:1180px;top:814px;width:56px;height:16px;background:#F5CD47">MEDIUM</div>
<div class="t cell" style="left:1431px;top:807px;">1800</div>
<div class="rf" style="left:1556px;top:812px;width:75px;height:23px"><svg style="left:5px;top:5px" width="11" height="11" viewBox="0 0 11 11"><path d="M1.3 9.9L9.3 1.9M2.8 1.6H9.6V8.3" fill="none" stroke="#1868DB" stroke-width="1.7"/></svg>BR-02</div>
<div class="loz" style="left:485px;top:883px;width:58px;height:22px">FN-03</div>
<div class="t cell" style="left:626px;top:878px;letter-spacing:0.084px;">Ut sit amet nulla posuere, pretium massa vel, pellentesque diam.</div>
<div class="t cell" style="left:626px;top:905px;letter-spacing:0.06px;">Vestibulum.</div>
<div class="pr" style="left:1180px;top:885px;width:56px;height:16px;background:#F5CD47">MEDIUM</div>
<div class="t cell" style="left:1431px;top:878px;">2800</div>
<div class="rf" style="left:1556px;top:883px;width:75px;height:23px"><svg style="left:5px;top:5px" width="11" height="11" viewBox="0 0 11 11"><path d="M1.3 9.9L9.3 1.9M2.8 1.6H9.6V8.3" fill="none" stroke="#1868DB" stroke-width="1.7"/></svg>BR-02</div>
<div class="loz" style="left:485px;top:955px;width:58px;height:22px">FN-04</div>
<div class="t cell" style="left:626px;top:950px;letter-spacing:0.106px;">Modification. Donec piverra risus aliquam. Integer laoreet lorem eros.</div>
<div class="pr" style="left:1180px;top:957px;width:62px;height:16px;background:#FD9891">CRITICAL</div>
<div class="t cell" style="left:1431px;top:950px;">9600</div>
<div class="rf" style="left:1560px;top:955px;width:75px;height:23px"><svg style="left:5px;top:5px" width="11" height="11" viewBox="0 0 11 11"><path d="M1.3 9.9L9.3 1.9M2.8 1.6H9.6V8.3" fill="none" stroke="#1868DB" stroke-width="1.7"/></svg>BR-03</div>
<div class="loz" style="left:485px;top:1009px;width:57px;height:22px">FN-05</div>
<div class="t cell" style="left:626px;top:1004px;letter-spacing:0.1px;">Phasellus auctor velit felis, non vestibulum erat gravida vel. Nunc enim</div>
<div class="t cell" style="left:626px;top:1031px;letter-spacing:0.135px;">augue, tempus eu tempor in, fringilla vel nunc. Pellentesque tincidunt</div>
<div class="t cell" style="left:626px;top:1058px;letter-spacing:0.127px;">coonec a porta enim. Aliquam erat volutpat. Nam eget quam eu erat</div>
<div class="t cell" style="left:626px;top:1085px;letter-spacing:0.039px;">varius scelerisque at eu mauris.</div>
<div class="pr" style="left:1180px;top:1011px;width:34px;height:16px;background:#DCDFE4">LOW</div>
<div class="t cell" style="left:1431px;top:1004px;">1600</div>
<div class="rf" style="left:1556px;top:1009px;width:75px;height:23px"><svg style="left:5px;top:5px" width="11" height="11" viewBox="0 0 11 11"><path d="M1.3 9.9L9.3 1.9M2.8 1.6H9.6V8.3" fill="none" stroke="#1868DB" stroke-width="1.7"/></svg>BR-02</div>
<div class="rf" style="left:1556px;top:1057px;width:105px;height:23px"><svg style="left:5px;top:5px" width="11" height="11" viewBox="0 0 11 11"><path d="M1.3 9.9L9.3 1.9M2.8 1.6H9.6V8.3" fill="none" stroke="#1868DB" stroke-width="1.7"/></svg>REQ-001 *</div>
<div class="loz" style="left:485px;top:1135px;width:58px;height:22px;border-color:#1868DB">FN-06</div>
<div class="t cell" style="left:626px;top:1130px;letter-spacing:0.08px;">Lorem ipsum dolor sit amet, co.</div>
<div class="pr" style="left:1180px;top:1137px;width:62px;height:16px;background:#FD9891">CRITICAL</div>
<div class="t cell" style="left:1431px;top:1130px;">7200</div>
<div class="rf" style="left:1556px;top:1135px;width:73px;height:23px"><svg style="left:5px;top:5px" width="11" height="11" viewBox="0 0 11 11"><path d="M1.3 9.9L9.3 1.9M2.8 1.6H9.6V8.3" fill="none" stroke="#1868DB" stroke-width="1.7"/></svg>BR-01</div>
<!-- /TABLES -->
<!-- ===== POPUP ===== -->
<div class="a" style="left:787px;top:235px;width:421px;height:221px;background:#fff;border:1px solid #E4E6EA;border-radius:3px;box-shadow:0 4px 14px rgba(9,30,66,0.16),0 0 1px rgba(9,30,66,0.2)"></div>
<svg style="left:843px;top:226px" width="22" height="11" viewBox="0 0 22 11"><path d="M0 10.5L10 0.8L20 10.5" fill="#fff" stroke="#E4E6EA" stroke-width="1"/><rect x="0" y="10" width="22" height="2" fill="#fff"/></svg>
<div class="t" style="left:808px;top:260px;font-size:15.5px;line-height:20px;font-weight:bold;color:#172B4D;letter-spacing:0.2px">Requirement Yogi</div>
<svg style="left:809px;top:287px" width="15" height="15" viewBox="0 0 15 15"><circle cx="6" cy="6" r="5.1" fill="none" stroke="#1868DB" stroke-width="1.5"/><path d="M9.8 9.8L13.8 13.8" stroke="#1868DB" stroke-width="1.5"/></svg>
<div class="t" style="left:828px;top:285px;font-size:15px;line-height:20px;color:#1868DB;letter-spacing:-0.28px">See document in the search</div>
<svg style="left:804px;top:308px" width="24" height="24" viewBox="0 0 24 24"><g fill="none" stroke="#1868DB" stroke-width="1.45"><path d="M10.3 4.9A6.3 6.3 0 0 0 11.3 17.3"/><path d="M6.2 4.9H10.3V8.9"/><path d="M13.7 4.9A6.3 6.3 0 0 1 12.7 17.3"/><path d="M13.6 13V17.3H17.9"/></g></svg>
<div class="t" style="left:828px;top:310px;font-size:15px;line-height:20px;color:#1868DB;letter-spacing:-0.75px">Reindex</div>
<div class="a" style="left:884px;top:313px;width:67px;height:15px;border-radius:8px;background:#DCFFF1"></div>
<div class="t" style="left:884px;top:313px;width:67px;text-align:center;font-size:12px;line-height:15px;color:#216E4E;letter-spacing:-0.35px">SUCCESS</div>
<div class="t" style="left:960px;top:310px;font-size:15px;line-height:20px;color:#172B4D;letter-spacing:-0.3px">3 minutes ago</div>
<div class="a" style="left:802px;top:330px;width:187px;height:29px;border:2px solid #EE3322"></div>
<svg style="left:804px;top:330px" width="24" height="24" viewBox="0 0 24 24"><path d="M12 7.3Q13.2 12.5 18.5 13.7Q13.2 14.9 12 20.2Q10.8 14.9 5.5 13.7Q10.8 12.5 12 7.3Z" fill="none" stroke="#1868DB" stroke-width="1.35" stroke-linejoin="round"/><path d="M6.3 6V10M4.3 8H8.3M17.9 17.6V21.8M15.8 19.7H20" stroke="#1868DB" stroke-width="1.3"/></svg>
<div class="t" style="left:828px;top:335px;font-size:15px;line-height:20px;color:#1868DB;letter-spacing:-0.2px;text-decoration:underline;text-underline-offset:2px">Transformation wizard</div>
<svg style="left:804px;top:354px" width="24" height="24" viewBox="0 0 24 24"><g fill="none" stroke="#1868DB" stroke-width="1.45"><rect x="5.3" y="8.2" width="11.3" height="11.3" rx="2"/><path d="M19.4 12.6V19.8C19.4 21 18.6 21.8 17.4 21.8H10.2"/></g></svg>
<div class="t" style="left:828px;top:360px;font-size:15px;line-height:20px;color:#1868DB;letter-spacing:-0.13px">Variant: "Current" (change)</div>
<div class="t" style="left:808px;top:386px;font-size:13.5px;line-height:18px;color:#172B4D;letter-spacing:0px">This page is indexed by <span style="color:#1868DB">Requirement Yogi</span>.</div>
<div class="t" style="left:984px;top:406px;font-size:13.5px;line-height:18px;color:#626F86">Help</div>

<!-- quickstart -->
<div class="a" style="left:1746px;top:1097px;width:136px;height:39px;border-radius:20px;background:#904FBF;box-shadow:0 4px 12px rgba(0,0,0,0.18)"></div>
<svg style="left:1764px;top:1109px" width="12" height="16" viewBox="0 0 12 16"><path d="M3.6 11.2V10C3.6 8.8 1 7.5 1 5.2A5 5 0 0 1 11 5.2C11 7.5 8.4 8.8 8.4 10V11.2Z" fill="none" stroke="#fff" stroke-width="1.3" stroke-linejoin="round"/><path d="M3.6 11.5V13.5C3.6 14.3 4.3 15 5.1 15H6.9C7.7 15 8.4 14.3 8.4 13.5V11.5" fill="none" stroke="#fff" stroke-width="1.3"/></svg>
<div class="t" style="left:1786px;top:1107px;font-size:16px;line-height:20px;color:#fff;font-weight:bold;letter-spacing:-0.35px">Quickstart</div>

<!-- bottom window edge -->
<div class="a" style="left:0;top:1132px;width:1929px;height:16px;background:linear-gradient(rgba(0,0,0,0),rgba(0,0,0,0.045))"></div>
<div class="a" style="left:0;top:1148px;width:1899px;height:1px;background:#1a1a1a;border-top-right-radius:1px"></div>
</body></html>
